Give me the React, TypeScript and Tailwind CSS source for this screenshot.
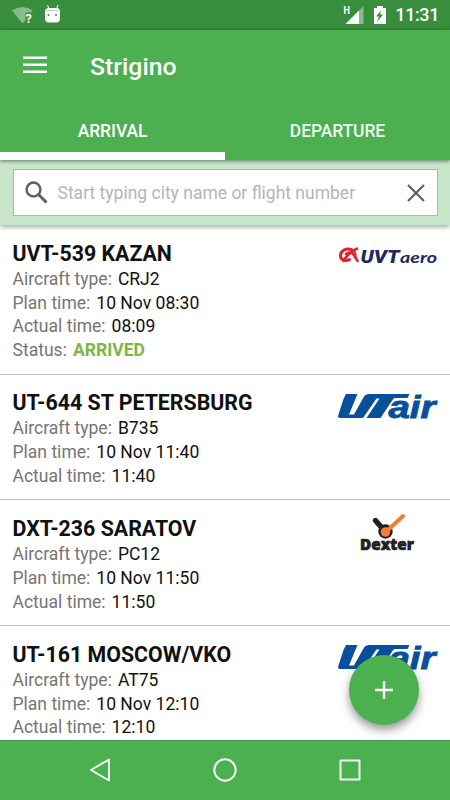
import type { ReactNode } from 'react'

interface Flight {
  code: string
  aircraft: string
  plan: string
  actual: string
  status?: string
  airline: 'uvt' | 'utair' | 'dexter'
}

const flights: Flight[] = [
  { code: 'UVT-539 KAZAN', aircraft: 'CRJ2', plan: '10 Nov 08:30', actual: '08:09', status: 'ARRIVED', airline: 'uvt' },
  { code: 'UT-644 ST PETERSBURG', aircraft: 'B735', plan: '10 Nov 11:40', actual: '11:40', airline: 'utair' },
  { code: 'DXT-236 SARATOV', aircraft: 'PC12', plan: '10 Nov 11:50', actual: '11:50', airline: 'dexter' },
  { code: 'UT-161 MOSCOW/VKO', aircraft: 'AT75', plan: '10 Nov 12:10', actual: '12:10', airline: 'utair' },
]

function UvtLogo() {
  return (
    <svg width="100" height="40" viewBox="0 0 100 40">
      <g fill="none" stroke="#d9262e" strokeLinecap="round">
        <path d="M14.500 12.700C9 10.500 3.700 14 3.500 18.500c-.1 4.500 5 6.200 9 4" strokeWidth="3" />
        <path d="M20 11.700C14 14 10 18 6.500 24" strokeWidth="2.600" />
        <path d="M9 17c4-3 7.500-1.500 11.500 7" strokeWidth="2.600" />
        <path d="M17 14.500c2 2 2 4.500.5 6" strokeWidth="2" />
      </g>
      <g fill="#20295f" fontStyle="italic">
        <text x="23.500" y="26" fontSize="17.500" fontFamily="Roboto, sans-serif" fontWeight="900" textLength="39" lengthAdjust="spacingAndGlyphs">UVT</text>
        <text x="63" y="26" fontSize="16" fontFamily="Lato, sans-serif" fontWeight="700" textLength="37" lengthAdjust="spacingAndGlyphs">aero</text>
      </g>
    </svg>
  )
}

function UtairLogo() {
  return (
    <svg width="100" height="40" viewBox="0 0 100 40">
      <g fill="#07509b">
        <path d="M9 7H20.500L12 27.500H17L27 9.500Q28.500 7 31.500 7H72.500L70.500 11H58.500Q56.500 11 55.500 13L43.500 31H29.500L42.500 11.500H39.500L26 31H3.500Q0 31 1.500 27.500L6.500 12z" />
        <text x="51.500" y="31" fontSize="31.500" fontFamily="'Liberation Sans', sans-serif" fontStyle="italic" fontWeight="700" textLength="47" lengthAdjust="spacingAndGlyphs" stroke="#07509b" strokeWidth=".9">air</text>
      </g>
    </svg>
  )
}

function DexterLogo() {
  return (
    <svg width="100" height="40" viewBox="0 0 100 40">
      <path d="M38.500 8.500L45.500 16.500" stroke="#231f20" strokeWidth="5.400" strokeLinecap="round" />
      <circle cx="48.500" cy="19.500" r="7.200" fill="#231f20" />
      <path d="M66 4L51 18" stroke="#f47a38" strokeWidth="4" strokeLinecap="round" />
      <circle cx="48.500" cy="20" r="4.800" fill="#f47a38" />
      <text x="23" y="38" fill="#231f20" stroke="#231f20" strokeWidth=".7" fontFamily="'Open Sans', sans-serif" fontSize="16.500" fontWeight="800" textLength="54" lengthAdjust="spacingAndGlyphs">Dexter</text>
    </svg>
  )
}

const logos: Record<Flight['airline'], ReactNode> = {
  uvt: <UvtLogo />,
  utair: <UtairLogo />,
  dexter: <DexterLogo />,
}

function Field({ label, children }: { label: string; children: ReactNode }) {
  return (
    <p className="flex h-[23.75px] items-center gap-[6px] text-[17.55px] text-[#757575]">
      <span>{label}:</span>
      {children}
    </p>
  )
}

function FlightRow({ flight }: { flight: Flight }) {
  return (
    <li className="flex items-start justify-between border-b border-[#c0c0c0] pt-[14.500px] pr-[13px] pb-[11.250px] pl-[12.500px]">
      <div className="whitespace-nowrap">
        <h2 className="h-[27.75px] text-[21.35px] leading-[28px] font-bold text-[#111]">{flight.code}</h2>
        <Field label="Aircraft type"><span className="text-[#111]">{flight.aircraft}</span></Field>
        <Field label="Plan time"><span className="text-[#111]">{flight.plan}</span></Field>
        <Field label="Actual time"><span className="text-[#111]">{flight.actual}</span></Field>
        {flight.status && (
          <Field label="Status"><span className="font-bold text-[#7cb83f]">{flight.status}</span></Field>
        )}
      </div>
      <div className="-mt-[2.500px] [&>svg]:overflow-visible">{logos[flight.airline]}</div>
    </li>
  )
}

function StatusBar() {
  return (
    <div className="flex h-[30px] shrink-0 items-center justify-between bg-[#388e3c] pr-[11px] pl-[12px] text-white">
      <svg width="50" height="30" viewBox="0 0 50 30">
        <path d="M0 10.500Q10.500 3.500 21 10.500l-2.500 2h-5v7.500L10.500 23.500z" fill="#fff" fillOpacity=".4" />
        <text x="13.500" y="22.500" fill="#fff" fontSize="12.500" fontWeight="700" fontFamily="Roboto, sans-serif">?</text>
        <path d="M35.500 5l1.500 4M46 5l-1.500 4" stroke="#fff" strokeWidth="1" />
        <path d="M33 12q0-4 4-4h7.500q3.500 0 3.500 4v6.500q0 4-4 4H37q-4 0-4-4z" fill="#fff" />
        <path d="M34.500 10.500h12" stroke="#b8d6ba" strokeWidth="1" />
        <circle cx="36.500" cy="15" r="1" fill="#388e3c" />
        <circle cx="44" cy="15" r="1" fill="#388e3c" />
      </svg>
      <div className="flex items-center">
        <svg width="52" height="30" viewBox="0 0 52 30">
          <text x="0.500" y="14" fill="#fff" fontSize="10.500" fontWeight="700" fontFamily="Roboto, sans-serif" textLength="6.500" lengthAdjust="spacingAndGlyphs">H</text>
          <path d="M20.500 6v18h-4.500V10.500z" fill="#fff" fillOpacity=".4" />
          <path d="M16 10.500V24H2.500z" fill="#fff" />
          <path fillRule="evenodd" d="M31 8h3V6h6v2h3v16H31zM38 10.500l-5 6h3L34 22l6-7.500h-3z" fill="#fff" />
        </svg>
        <span className="text-[18px] leading-[30px] font-medium tracking-[-0.4px]">11:31</span>
      </div>
    </div>
  )
}

export default function App() {
  return (
    <div className="flex h-[800px] w-[450px] flex-col overflow-hidden bg-white font-[Roboto,sans-serif]">
      <StatusBar />
      <header className="relative z-20 h-[130px] shrink-0 bg-[#4caf50] text-white shadow-[0_1px_4px_rgba(0,0,0,0.5)]">
        <div className="flex h-[70px] items-center gap-[43px] pl-[23px]">
          <svg width="24" height="18" viewBox="0 0 24 18" fill="#fff">
            <path d="M0 .5h24V3H0zM0 7.500h24V10H0zM0 14.500h24V17H0z" />
          </svg>
          <h1 className="pt-[3px] text-[24.8px] font-medium">Strigino</h1>
        </div>
        <nav className="flex h-[60px] text-[17.5px] font-medium">
          <button className="w-1/2 border-b-[8px] border-white pt-[10px] tracking-[-0.1px]">ARRIVAL</button>
          <button className="w-1/2 border-b-[8px] border-transparent pt-[10px] tracking-[-0.1px] text-[#edf7ed]">DEPARTURE</button>
        </nav>
      </header>
      <div className="relative z-10 h-[65px] shrink-0 bg-[#c8e6c9] px-[12.500px] pt-[9px] shadow-[0_2px_5px_rgba(0,0,0,0.35)]">
        <label className="flex h-[47px] items-center border border-[#adb5ad] bg-white pr-[11.500px] pl-[11px]">
          <svg width="24" height="24" viewBox="0 0 24 24" fill="none" stroke="#606060" strokeWidth="2.500">
            <circle cx="8.500" cy="8.500" r="6.900" />
            <path d="M13.500 13.500l8 8" strokeWidth="3" />
          </svg>
          <span className="ml-[9px] grow pt-[2px] text-[17.5px] whitespace-nowrap text-[#b5b5b5]">Start typing city name or flight number</span>
          <svg width="18" height="18" viewBox="0 0 18 18" stroke="#606060" strokeWidth="2.200">
            <path d="M1 1l16 16M17 1L1 17" />
          </svg>
        </label>
      </div>
      <ul className="min-h-0 grow overflow-hidden">
        {flights.map((flight) => (
          <FlightRow key={flight.code} flight={flight} />
        ))}
      </ul>
      <button className="absolute top-[655px] left-[349px] z-10 flex size-[70px] items-center justify-center rounded-full bg-[#4caf50] shadow-[0_5px_10px_rgba(0,0,0,0.4)]">
        <svg width="18" height="18" viewBox="0 0 18 18" stroke="#fff" strokeWidth="2.400">
          <path d="M9 0v18M0 9h18" />
        </svg>
      </button>
      <nav className="relative z-20 flex h-[60px] shrink-0 items-center justify-center gap-[101px] border-t border-[#43a047] bg-[#4caf50] pb-px">
        <svg width="24" height="24" viewBox="0 0 24 24" fill="none" stroke="#effaef" strokeWidth="2" strokeLinejoin="round">
          <path d="M3 12L21 1.500v21z" />
        </svg>
        <svg width="24" height="24" viewBox="0 0 24 24" fill="none" stroke="#effaef" strokeWidth="2">
          <circle cx="12" cy="12" r="10.700" />
        </svg>
        <svg width="24" height="24" viewBox="0 0 24 24" fill="none" stroke="#effaef" strokeWidth="2" strokeLinejoin="round">
          <path d="M2.500 2.500h19v19h-19z" />
        </svg>
      </nav>
    </div>
  )
}
